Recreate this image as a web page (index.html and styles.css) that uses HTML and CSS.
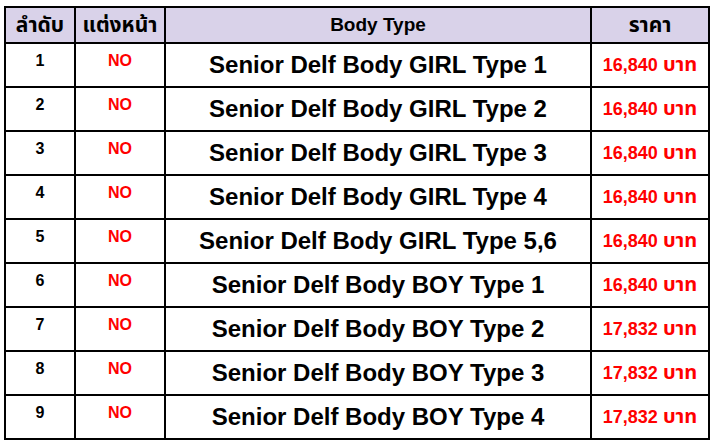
FILE: index.html
```html
<!DOCTYPE html>
<html lang="th">
<head>
<meta charset="utf-8">
<link rel="stylesheet" href="styles.css">
</head>
<body>
<div class="wrap">
<table class="price-table">
  <colgroup>
    <col class="c-no"><col class="c-makeup"><col class="c-type"><col class="c-price">
  </colgroup>
  <thead>
    <tr><th class="thai">ลำดับ</th><th class="thai">แต่งหน้า</th><th>Body Type</th><th class="thai">ราคา</th></tr>
  </thead>
  <tbody>
    <tr><td class="num">1</td><td class="no">NO</td><td class="type">Senior Delf Body GIRL Type 1</td><td class="price">16,840 <span class="baht">บาท</span></td></tr>
    <tr><td class="num">2</td><td class="no">NO</td><td class="type">Senior Delf Body GIRL Type 2</td><td class="price">16,840 <span class="baht">บาท</span></td></tr>
    <tr><td class="num">3</td><td class="no">NO</td><td class="type">Senior Delf Body GIRL Type 3</td><td class="price">16,840 <span class="baht">บาท</span></td></tr>
    <tr><td class="num">4</td><td class="no">NO</td><td class="type">Senior Delf Body GIRL Type 4</td><td class="price">16,840 <span class="baht">บาท</span></td></tr>
    <tr><td class="num">5</td><td class="no">NO</td><td class="type">Senior Delf Body GIRL Type 5,6</td><td class="price">16,840 <span class="baht">บาท</span></td></tr>
    <tr><td class="num">6</td><td class="no">NO</td><td class="type">Senior Delf Body BOY Type 1</td><td class="price">16,840 <span class="baht">บาท</span></td></tr>
    <tr><td class="num">7</td><td class="no">NO</td><td class="type">Senior Delf Body BOY Type 2</td><td class="price">17,832 <span class="baht">บาท</span></td></tr>
    <tr><td class="num">8</td><td class="no">NO</td><td class="type">Senior Delf Body BOY Type 3</td><td class="price">17,832 <span class="baht">บาท</span></td></tr>
    <tr><td class="num">9</td><td class="no">NO</td><td class="type">Senior Delf Body BOY Type 4</td><td class="price">17,832 <span class="baht">บาท</span></td></tr>
  </tbody>
</table>
</div>
</body>
</html>
```

FILE: styles.css
```css
html, body {
  margin: 0;
  padding: 0;
  background: #ffffff;
}
.wrap {
  padding: 6px 0 0 4px;
}
.price-table {
  border-collapse: collapse;
  table-layout: fixed;
  width: 704px;
  font-family: "Liberation Sans", Arial, "Noto Sans Thai", Tahoma, sans-serif;
  font-weight: bold;
  color: #000000;
  line-height: 1.15;
}
.c-no { width: 70px; }
.c-makeup { width: 90px; }
.c-type { width: 426px; }
.c-price { width: 118px; }
.price-table th,
.price-table td {
  border: 2px solid #000000;
  padding: 0;
  text-align: center;
}
.price-table th {
  background: #d9d2e9;
  height: 34px;
  font-size: 19px;
  vertical-align: middle;
}
.price-table th.thai {
  font-size: 21px;
}
.price-table td {
  height: 44px;
  box-sizing: border-box;
}
.price-table td.num,
.price-table td.no,
.price-table td.price {
  vertical-align: top;
  padding-top: 8px;
}
.price-table td.price {
  padding-top: 9px;
}
.num {
  font-size: 16px;
}
.no {
  font-size: 16px;
  color: #ff0000;
}
.type {
  font-size: 24px;
  vertical-align: middle;
}
.price {
  font-size: 18px;
  color: #ff0000;
}
.baht {
  font-size: 20px;
}
```
